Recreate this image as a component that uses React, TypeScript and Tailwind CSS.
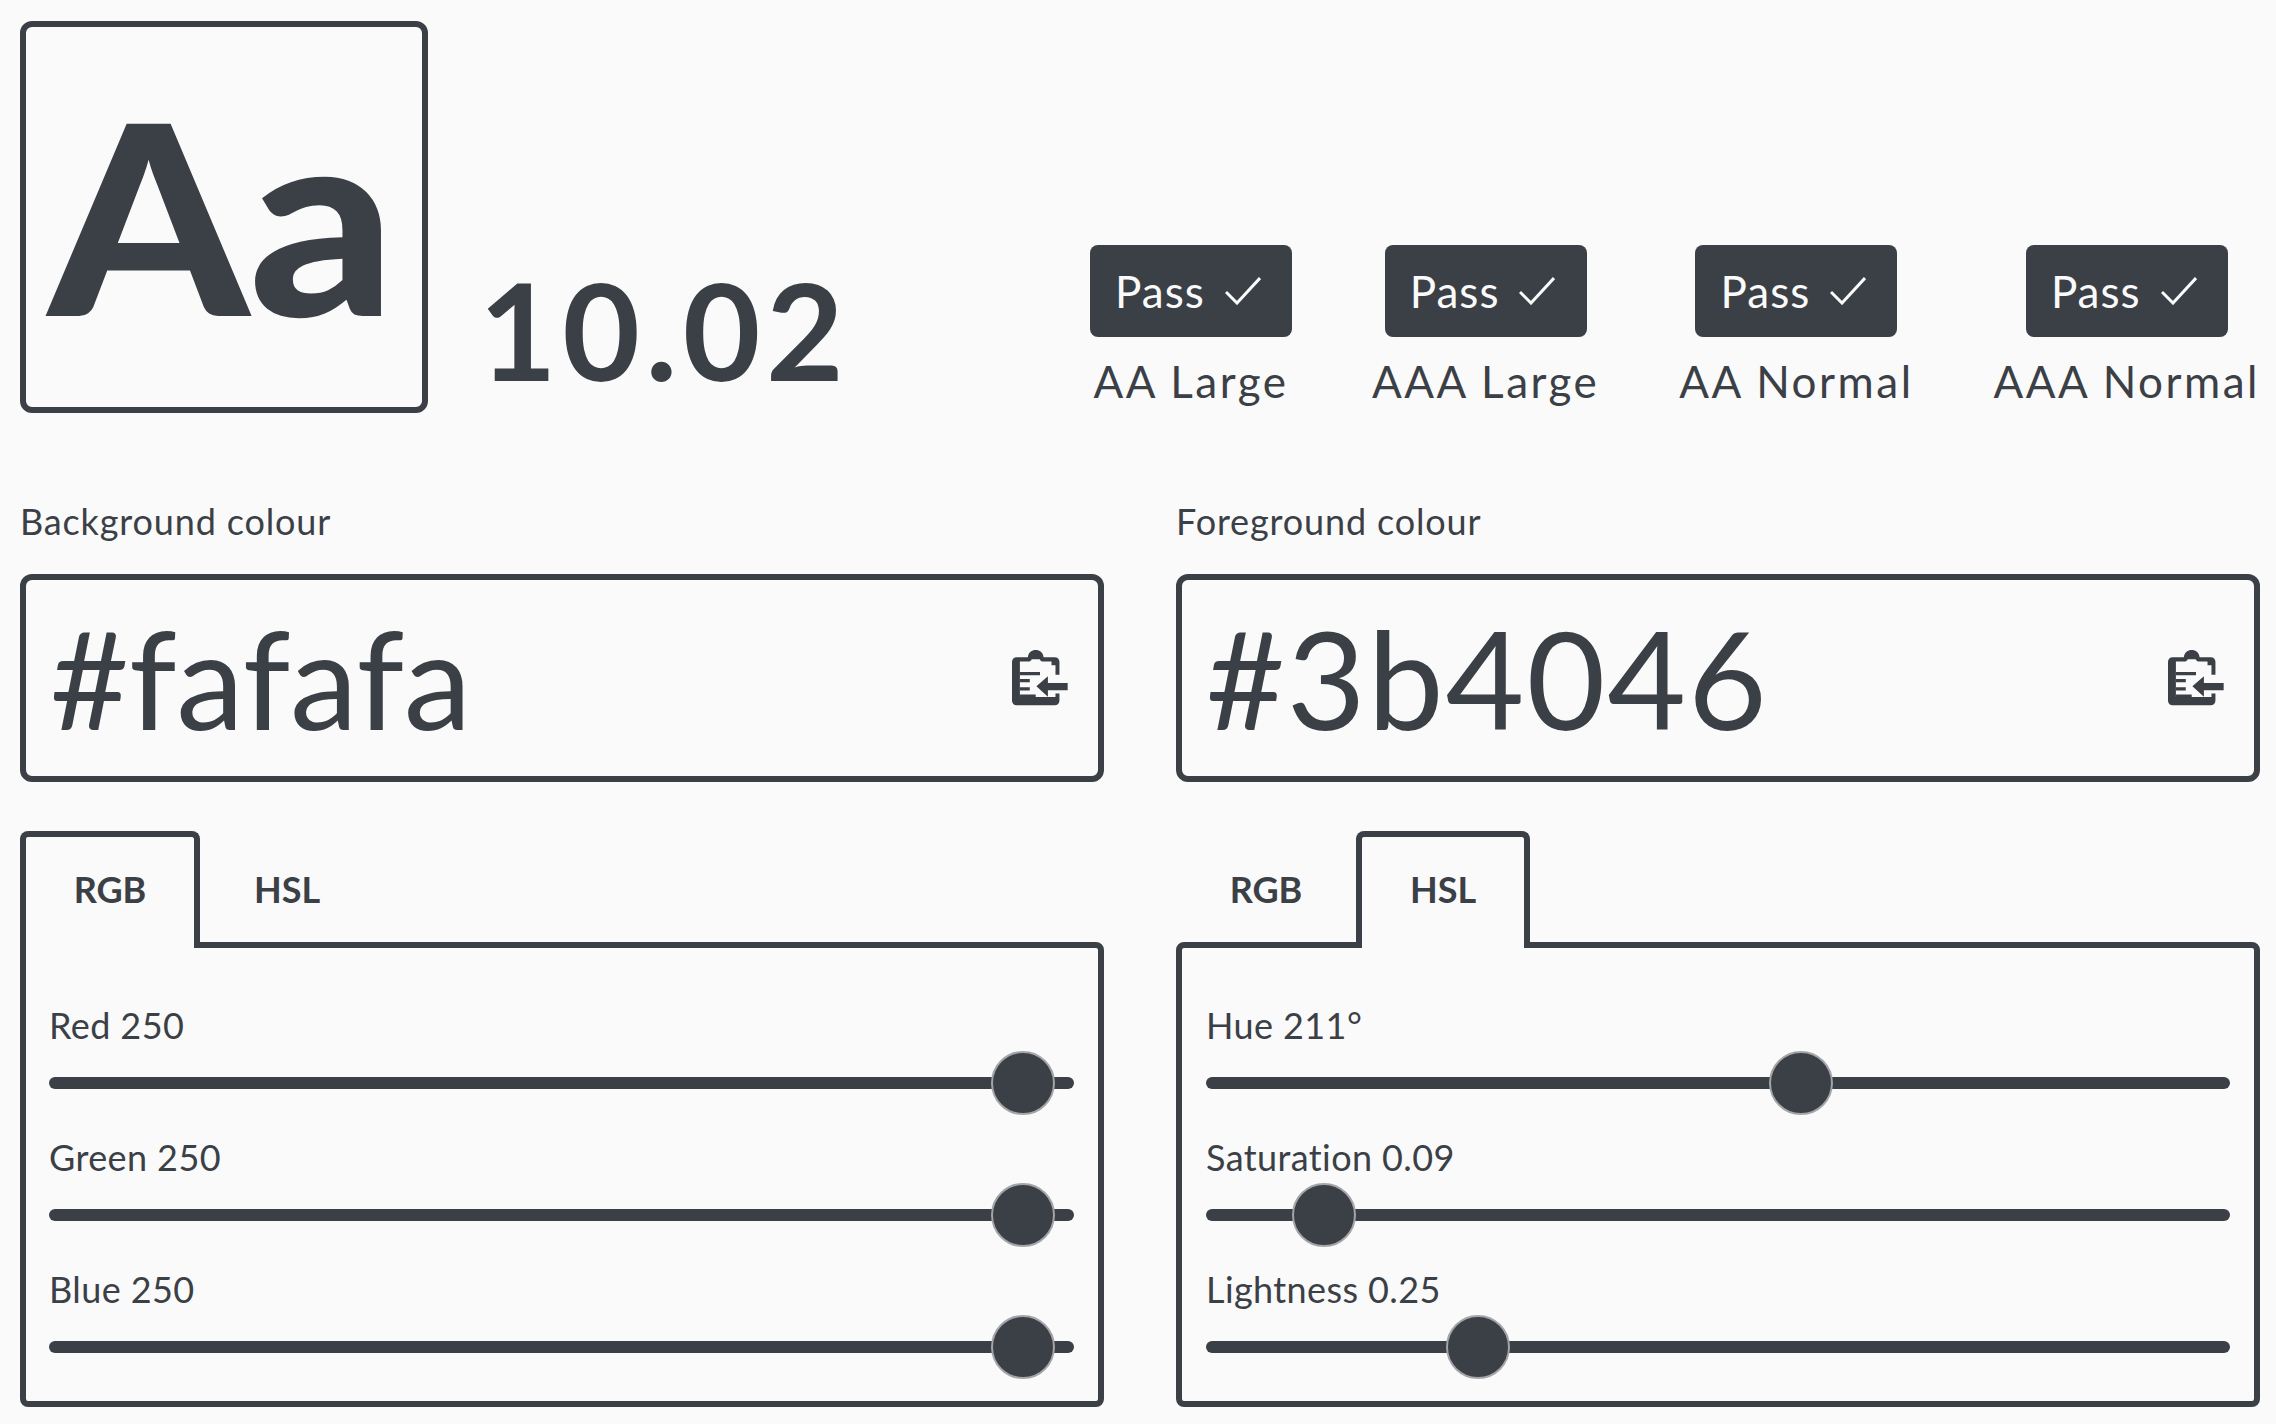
const sans = "font-['Lato','Liberation_Sans',sans-serif]";

function PasteIcon() {
  return (
    <svg viewBox="96 90 170 170" className="w-14 h-14 shrink-0" fill="#3b4046">
      <path
        fillRule="evenodd"
        d="M110 112H144C146 97 156 90 168 90C180 90 190 97 192 112H226C234 112 240 118 240 126V165H228V136H120V233H228V222H240V244C240 252 234 258 226 258H110C102 258 96 252 96 244V126C96 118 102 112 110 112ZM120 125V136H216V125H190C186 125 182 122 180 118H156C154 122 150 125 146 125Z"
      />
      <path d="M120 157H181V167H120ZM120 178H150V188H120ZM120 203H150V213H120ZM120 225H168V235H120Z" />
      <path d="M170 200L205 170V190H265V212H205V232Z" />
    </svg>
  );
}

function Score({ label }: { label: string }) {
  return (
    <div className="flex flex-col items-center">
      <div className="w-[202px] h-[92px] rounded-lg bg-[#3b4046] text-[#fafafa] text-[44px] tracking-[1px] flex items-center justify-center gap-5 pr-[6px]">
        Pass
        <svg viewBox="0 0 36 28" className="w-9 h-7" fill="none" stroke="#fafafa" strokeWidth="3">
          <path d="M1 15L12 26L35 1" />
        </svg>
      </div>
      <div className="mt-[16px] text-[44px] leading-[56px] tracking-[2.5px]">{label}</div>
    </div>
  );
}

function Slider({ label, percent }: { label: string; percent: number }) {
  return (
    <div className="h-[132px] flex flex-col">
      <div className="text-[36px] leading-[44px] tracking-[0.4px] h-[74px]">{label}</div>
      <div className="relative h-3 rounded-full bg-[#3b4046]">
        <div
          className="absolute -top-[26px] w-16 h-16 rounded-full bg-[#3b4046] border-2 border-[#a3a5a8]"
          style={{ left: `calc((100% - 64px) * ${percent})` }}
        />
      </div>
    </div>
  );
}

function Column({
  title,
  value,
  valueClass,
  active,
  sliders,
}: {
  title: string;
  value: string;
  valueClass: string;
  active: 'RGB' | 'HSL';
  sliders: { label: string; percent: number }[];
}) {
  return (
    <div className="w-[1084px]">
      <div className="text-[36px] leading-[44px] tracking-[0.85px] h-[75px]">{title}</div>
      <div className="h-[208px] rounded-xl border-[6px] border-[#3b4046] pl-[24px] pr-[30px] flex items-center justify-between">
        <span className={valueClass}>{value}</span>
        <PasteIcon />
      </div>
      <div className="flex mt-[49px] relative z-10 -mb-[6px]">
        {(['RGB', 'HSL'] as const).map((tab) => (
          <div
            key={tab}
            className={
              (tab === 'RGB' ? 'w-[180px] ' : 'w-[174px] ') +
              (tab === active
                ? 'h-[117px] rounded-t-lg border-[6px] border-b-0 border-[#3b4046] bg-[#fafafa] flex items-center justify-center pb-[8px] text-[36px] font-bold'
                : 'h-[117px] border-[6px] border-b-0 border-transparent flex items-center justify-center pb-[8px] text-[36px] font-bold')
            }
          >
            {tab}
          </div>
        ))}
      </div>
      <div
        className={
          active === 'RGB'
            ? 'h-[465px] rounded-b-lg rounded-tr-lg border-[6px] border-[#3b4046] pt-[55px] pl-[23px] pr-[24px]'
            : 'h-[465px] rounded-lg border-[6px] border-[#3b4046] pt-[55px] px-[24px]'
        }
      >
        {sliders.map((s) => (
          <Slider key={s.label} label={s.label} percent={s.percent} />
        ))}
      </div>
    </div>
  );
}

export default function App() {
  return (
    <div className={`${sans} w-[2276px] h-[1424px] bg-[#fafafa] text-[#3b4046] pl-5 pr-4 pt-[21px] overflow-hidden`}>
      <div className="flex items-end h-[392px]">
        <div className="w-[408px] h-[392px] rounded-xl border-[6px] border-[#3b4046] flex items-center justify-center pb-2 pr-1">
          <span className="text-[265px] leading-none font-black scale-x-[1.08]">Aa</span>
        </div>
        <div className="ml-[51px] text-[134px] leading-none font-bold tracking-[5.5px] pb-[16px]">10.02</div>
        <div className="ml-auto flex gap-[80px] pb-[4px]">
          <Score label="AA Large" />
          <Score label="AAA Large" />
          <Score label="AA Normal" />
          <Score label="AAA Normal" />
        </div>
      </div>
      <div className="flex justify-between mt-[86px]">
        <Column
          title="Background colour"
          value="#fafafa"
          valueClass="text-[136px] leading-none"
          active="RGB"
          sliders={[
            { label: 'Red 250', percent: 250 / 255 },
            { label: 'Green 250', percent: 250 / 255 },
            { label: 'Blue 250', percent: 250 / 255 },
          ]}
        />
        <Column
          title="Foreground colour"
          value="#3b4046"
          valueClass="text-[136px] leading-none tracking-[1.9px]"
          active="HSL"
          sliders={[
            { label: 'Hue 211°', percent: 211 / 360 },
            { label: 'Saturation 0.09', percent: 0.09 },
            { label: 'Lightness 0.25', percent: 0.25 },
          ]}
        />
      </div>
    </div>
  );
}
